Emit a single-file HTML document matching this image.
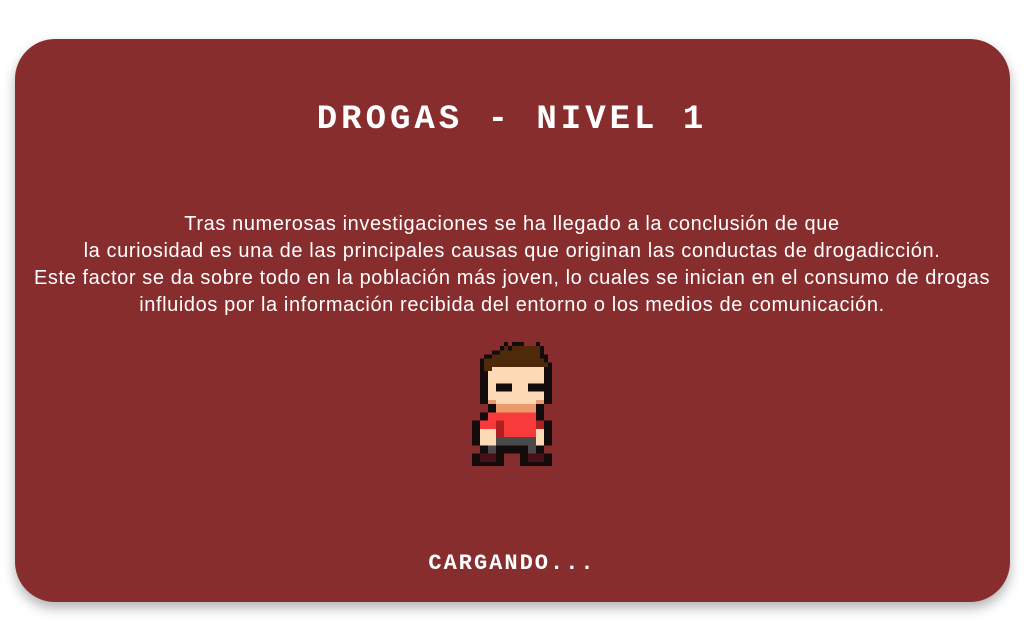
<!DOCTYPE html>
<html><head><meta charset="utf-8"><style>
html,body{margin:0;padding:0;background:#fff;width:1024px;height:640px;overflow:hidden}
.card{position:absolute;left:15px;top:39px;width:995px;height:563px;background:#872d2e;border-radius:40px;box-shadow:0 6px 12px rgba(0,0,0,0.3)}
.title{position:absolute;left:0;right:0;top:101px;text-align:center;color:#fff;font:bold 34px "Liberation Mono",monospace;letter-spacing:4px}
.txt{position:absolute;left:0;width:1024px;top:211px;text-align:center;color:#fff;font:20px/27px "Liberation Sans",sans-serif;letter-spacing:0.6px}
.load{position:absolute;left:0;right:0;top:551px;text-align:center;color:#fff;font:bold 22px "Liberation Mono",monospace;letter-spacing:2px}
svg{position:absolute;left:472px;top:342px}
</style></head><body>
<div class="card"></div>
<div class="title">DROGAS - NIVEL 1</div>
<div class="txt">Tras numerosas investigaciones se ha llegado a la conclusión de que<br>la curiosidad es una de las principales causas que originan las conductas de drogadicción.<br>Este factor se da sobre todo en la población más joven, lo cuales se inician en el consumo de drogas<br>influidos por la información recibida del entorno o los medios de comunicación.</div>
<svg id="s" width="80" height="124" viewBox="0 0 80 120" preserveAspectRatio="none" shape-rendering="crispEdges"></svg>
<div class="load">CARGANDO...</div>
<script>
var rows=["........K.KKK...K...",".......KBKBBBBBBBK..",".....KKBBBBBBBBBBK..","...KKBBBBBBBBBBBBKK.","..KBBBBBBBBBBBBBBBK.","..KBBBBBBBBBBBBBBBBK","..KBBSSSSSSSSSSSSSKK","..KKSSSSSSSSSSSSSSKK","..KKSSSSSSSSSSSSSSKK","..KKSSSSSSSSSSSSSSKK","..KKSSKKKKSSSSKKKKKK","..KKSSKKKKSSSSKKKKKK","..KKSSSSSSSSSSSSSSKK","..KKSSSSSSSSSSSSSSKK","..KKOOSSSSSSSSSSOOKK","....KKOOOOOOOOOOKK..","....KKOOOOOOOOOOKK..","..KKRRRRRRRRRRRRKK..","..KKRRRRRRRRRRRRKK..","KKRRRRDDRRRRRRRRDDKK","KKRRRRDDRRRRRRRRDDKK","KKSSSSDDRRRRRRRRSSKK","KKSSSSDDRRRRRRRRSSKK","KKSSSSGGGGGGGGGGSSKK","KKSSSSGGGGGGGGGGSSKK","..KKGGKKKKKKKKGGKK..","..KKGGKKKKKKKKGGKK..","KKMMMMKK....KKMMMMKK","KKMMMMKK....KKMMMMKK","KKKKKKKK....KKKKKKKK"];
var c={K:"#140c0c",B:"#4f2a0a",S:"#fdd9b5",O:"#ec9a6c",R:"#f83b3a",D:"#b02020",G:"#4a4a4a",M:"#45101a"};
var h="";rows.forEach(function(r,y){for(var x=0;x<20;x++){var ch=r[x];if(c[ch])h+='<rect x="'+x*4+'" y="'+y*4+'" width="4" height="4" fill="'+c[ch]+'"/>';}});
document.getElementById("s").innerHTML=h;
</script>
</body></html>
